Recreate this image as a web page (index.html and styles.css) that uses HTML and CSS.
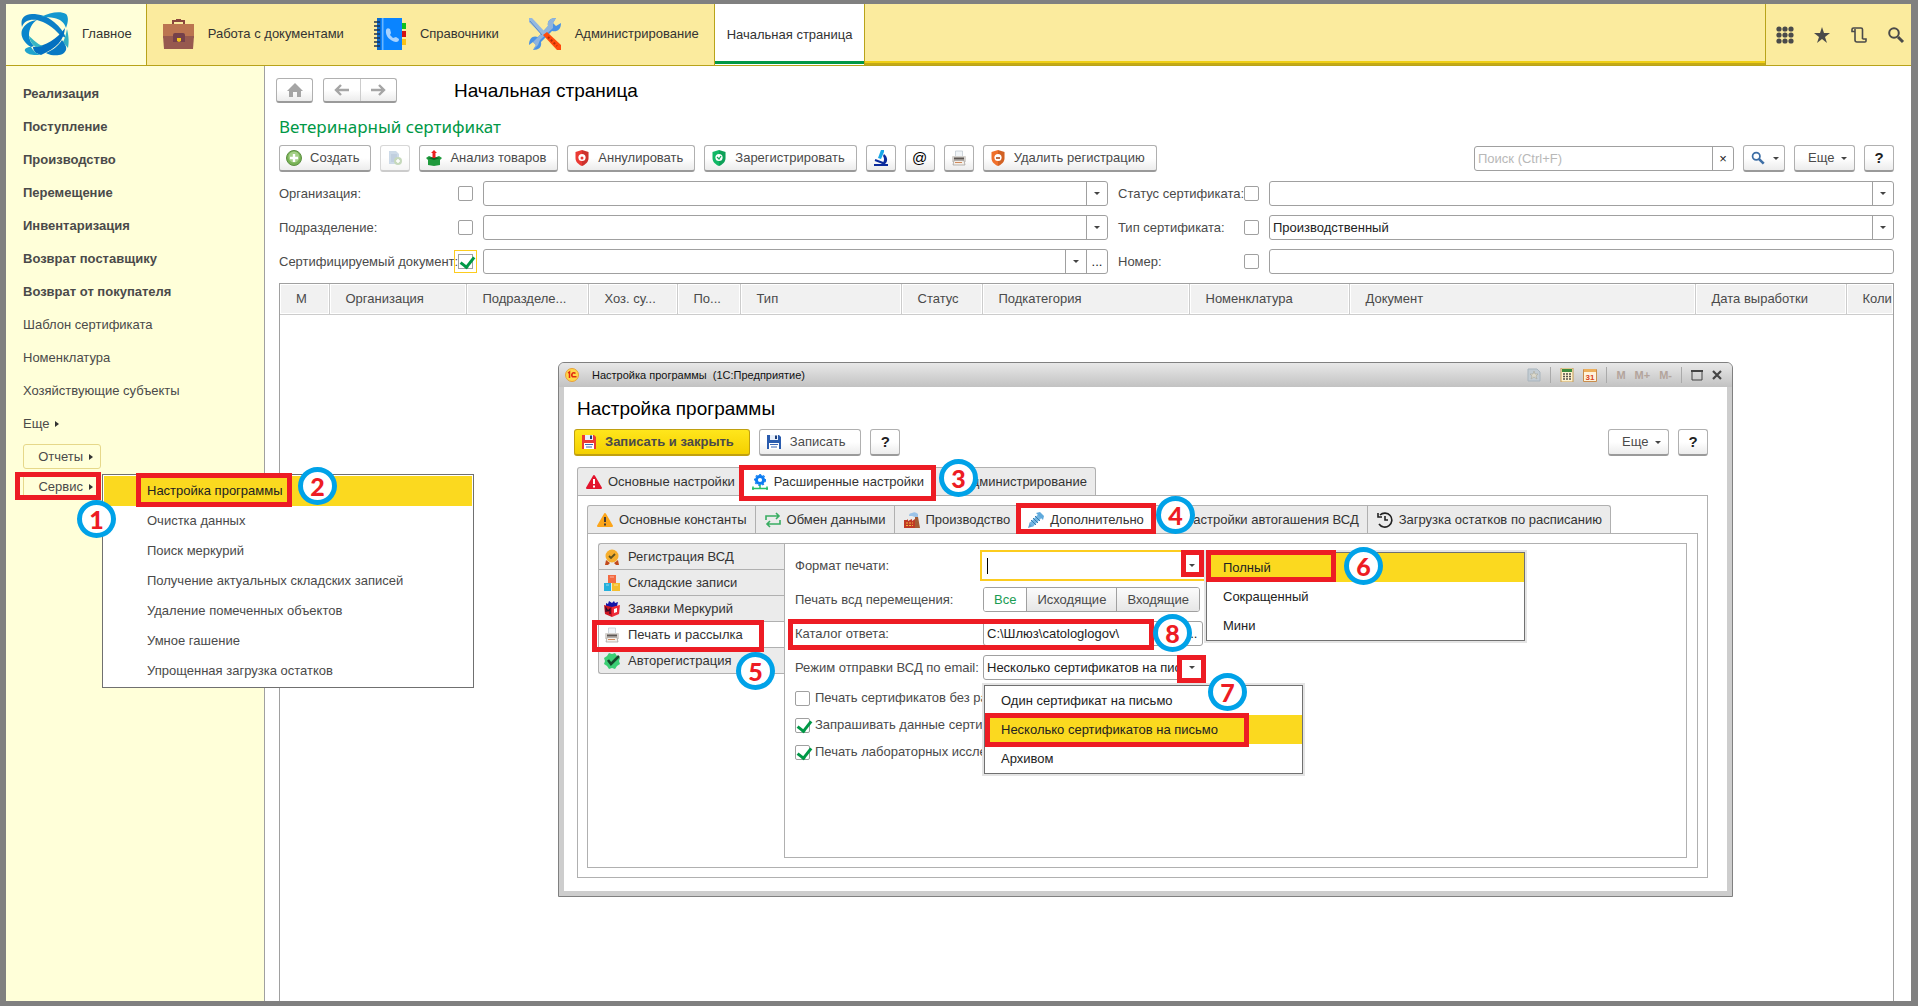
FILE: index.html
```
<!DOCTYPE html>
<html lang="ru">
<head>
  <meta charset="utf-8">
  <title>Начальная страница</title>
  <link rel="stylesheet" href="styles.css">
</head>
<body>
  <!-- shared icons -->
  <svg class="sprite" aria-hidden="true">
    <symbol id="i-printer" viewBox="0 0 16 16">
      <path d="M4.500 1h7v6h-7z" fill="#f1f5f8" stroke="#b4bec6" stroke-width=".6"/>
      <path d="M1 7q0-1 1-1h12q1 0 1 1v5H1z" fill="#d6d3cf"/>
      <path d="M3 7.500h10v2H3z" fill="#5e5753"/>
      <path d="M3 10.500h10l1 4.500H2z" fill="#f4efe9" stroke="#8f8a86" stroke-width=".6"/>
      <path d="M4 12.500h7" stroke="#d08a5c"/>
    </symbol>
    <symbol id="i-shield" viewBox="0 0 16 16">
      <path d="M8 0l6.500 2v6c0 4-3 6.500-6.500 8-3.500-1.500-6.500-4-6.500-8V2z" fill="currentColor"/>
      <path d="M8 0l6.500 2v6c0 4-3 6.500-6.500 8z" fill="#000" opacity=".12"/>
      <circle cx="8" cy="7.500" r="3.600" fill="#fff"/>
    </symbol>
    <symbol id="i-floppy" viewBox="0 0 16 16">
      <path d="M1 1h12l2 2v12H1z" fill="currentColor"/>
      <path d="M4 1h8v5H4z" fill="#e8f0fb"/>
      <path d="M9 1.500h2v3.500H9z" fill="#1d3e78"/>
      <path d="M3 9h10v6H3z" fill="#fff"/>
      <path d="M4 10.500h8M5 13h6" stroke="#3b67b5" stroke-width="1.200"/>
    </symbol>
    <symbol id="i-lens" viewBox="0 0 16 16">
      <circle cx="6" cy="6" r="4.200" fill="none" stroke="currentColor" stroke-width="2"/>
      <path d="M9 9l5.500 5.500" stroke="currentColor" stroke-width="3"/>
    </symbol>
  </svg>

  <div class="app">
    <header class="header">
      <nav class="sections">
        <a class="section current" href="#">
          <svg width="48" height="44" viewBox="0 0 48 44">
            <path d="M1 15C-1 7 3 2 11 2c8 0 15 2 22 8 6 5 10 10 12 16l-6-3C32 15 24 10 16 8 8 7 3 9 1 15z" fill="#0c7fc7"/>
            <path d="M20 5C29 0 40-1 45 2c3 3 2 9 0 14-2-6-6-9-12-10-4-1-8-1-13-1z" fill="#1498cf"/>
            <path d="M16 8c-5 3-8 9-8 15 0 4 2 8 5 11l-3 1C3 31-1 24 1 18c2-5 7-9 15-10z" fill="#0a86cc"/>
            <path d="M44 16c-1 12-8 20-24 27l-5-2c-2-2-3-4-3-6 13-1 24-8 32-19z" fill="#0470c0"/>
            <path d="M8 24c5 4 8 8 14 10l-7 1c-3-2-6-5-7-11z" fill="#36b5c4"/>
            <path d="M10 35c-4 0-7 2-6 4 2 3 6 4 11 4h5c-4-1-8-4-10-8z" fill="#20a4cd"/>
            <path d="M46 17c2 8 2 14 1 19l-5-6c2-4 3-8 4-13z" fill="#31aec4"/>
            <path d="M41 28c3 4 5 7 4 10-2 5-8 6-15 5-2-1-4-1-5-2 7-3 12-7 16-13z" fill="#0879c4"/>
          </svg>
          Главное
        </a>
        <a class="section" href="#">
          <svg width="32" height="32" viewBox="0 0 32 32">
            <path d="M10 6V2h4V1h5v1h4v4h-2V4H12v2z" fill="#8a463e"/>
            <path d="M1 6h31v14H1z" fill="#bb7450"/>
            <path d="M1 18h31l-1 13H2z" fill="#97594f"/>
            <path d="M11 17q0-2 2-2h8q2 0 2 2v7H11z" fill="#74404a"/>
            <path d="M15 20h4v3l-2 1-2-1z" fill="#f4c41c"/>
          </svg>
          Работа с документами
        </a>
        <a class="section" href="#">
          <svg width="32" height="32" viewBox="0 0 32 32">
            <path d="M28 5h4v6h-4z" fill="#0fc01d"/>
            <path d="M28 13h4v6h-4z" fill="#d31212"/>
            <path d="M28 21h4v6h-4z" fill="#fbc316"/>
            <path d="M3 0h25v32H3z" fill="#0a84ff"/>
            <path d="M3 0h4v32H3z" fill="#0b6bd0"/>
            <path d="M8 0h1.500v32H8z" fill="#69b5ff"/>
            <path d="M0 4h6M0 8h6M0 12h6M0 16h6M0 20h6M0 24h6M0 28h6" stroke="#1d3550" stroke-width="1.500"/>
            <path d="M12 12q1-3 4-1l1 4-1 2 3 3 3-1 3 2q0 3-3 3c-6-1-11-6-10-12z" fill="#a8d3ff"/>
          </svg>
          Справочники
        </a>
        <a class="section" href="#">
          <svg width="32" height="32" viewBox="0 0 32 32">
            <path d="M19 8c-1-5 2-8 8-8l-3 5 3 3 5-3c0 7-4 9-9 8L12 24c1 5-2 8-8 8l3-5-3-3-4 3c0-7 4-10 9-8z" fill="#4a92e4"/>
            <path d="M19 8c-1-5 2-8 8-8l-3 5v5L11 22l-2 5-5 5 3-5-3-3 5-5z" fill="#8fb4dd"/>
            <path d="M0 0h3l14 15-3 3L0 4z" fill="#93b8e0"/>
            <path d="M1 3l12 14" stroke="#5f8cc4"/>
            <path d="M14 17l4-3 14 13v5h-4z" fill="#ff4a0c"/>
            <path d="M19 19l9 9" stroke="#b42c08" stroke-width="2" stroke-dasharray="2 2"/>
          </svg>
          Администрирование
        </a>
      </nav>
      <a class="home-tab" href="#">Начальная страница</a>
      <div class="header-fill"></div>
      <div class="header-tools">
        <button type="button" aria-label="Функции">
          <svg width="18" height="18" viewBox="0 0 18 18" fill="#4a4a4a">
            <circle cx="3" cy="3" r="2.600"/><circle cx="9" cy="3" r="2.600"/><circle cx="15" cy="3" r="2.600"/>
            <circle cx="3" cy="9" r="2.600"/><circle cx="9" cy="9" r="2.600"/><circle cx="15" cy="9" r="2.600"/>
            <circle cx="3" cy="15" r="2.600"/><circle cx="9" cy="15" r="2.600"/><circle cx="15" cy="15" r="2.600"/>
          </svg>
        </button>
        <button type="button" aria-label="Избранное">
          <svg width="18" height="18" viewBox="0 0 18 18"><path d="M9 1l2 6h6l-5 4 2 6-5-4-5 4 2-6-5-4h6z" fill="#4a4a4a"/></svg>
        </button>
        <button type="button" aria-label="История">
          <svg width="18" height="18" viewBox="0 0 18 18" fill="none" stroke="#4a4a4a" stroke-width="1.600"><path d="M5 5.500H2V3.500q0-1.500 1.500-1.500H11q1.500 0 1.500 1.500V13M5 3v11q0 2 2 2h8q1 0 1-1v-2h-3.500"/></svg>
        </button>
        <button type="button" aria-label="Поиск">
          <svg width="18" height="18" viewBox="0 0 18 18" fill="none" stroke="#4a4a4a"><circle cx="7" cy="7" r="4.800" stroke-width="2"/><path d="M11 11l5 5" stroke-width="3"/></svg>
        </button>
      </div>
    </header>

    <div class="workspace">
      <aside class="sidebar">
        <a class="strong" href="#">Реализация</a>
        <a class="strong" href="#">Поступление</a>
        <a class="strong" href="#">Производство</a>
        <a class="strong" href="#">Перемещение</a>
        <a class="strong" href="#">Инвентаризация</a>
        <a class="strong" href="#">Возврат поставщику</a>
        <a class="strong" href="#">Возврат от покупателя</a>
        <a href="#">Шаблон сертификата</a>
        <a href="#">Номенклатура</a>
        <a href="#">Хозяйствующие субъекты</a>
        <a href="#">Еще <i class="arrow-right"></i></a>
        <button class="side-btn" type="button">Отчеты <i class="arrow-right"></i></button>
        <button class="side-btn" type="button">Сервис <i class="arrow-right"></i></button>
      </aside>

      <main class="main">
        <div class="nav-row">
          <button class="btn nav-home" type="button" aria-label="Домой">
            <svg width="16" height="14" viewBox="0 0 16 14"><path d="M8 0l8 8h-2v6h-4V9H6v5H2V8H0z" fill="#a5a5a5"/></svg>
          </button>
          <div class="nav-pair">
            <button type="button" aria-label="Назад">
              <svg width="16" height="12" viewBox="0 0 16 12"><path d="M15 6H3M7 1L2 6l5 5" fill="none" stroke="#a5a5a5" stroke-width="2.400"/></svg>
            </button>
            <button type="button" aria-label="Вперед">
              <svg width="16" height="12" viewBox="0 0 16 12"><path d="M1 6h12M9 1l5 5-5 5" fill="none" stroke="#a5a5a5" stroke-width="2.400"/></svg>
            </button>
          </div>
          <h1>Начальная страница</h1>
        </div>

        <section class="list">
          <h2>Ветеринарный сертификат</h2>
          <div class="toolbar">
            <button class="btn" type="button">
              <svg width="16" height="16" viewBox="0 0 16 16"><circle cx="8" cy="8" r="7.500" fill="#78b255" stroke="#5d8f43"/><circle cx="8" cy="7" r="5.500" fill="#a5d088"/><path d="M8 4v8M4 8h8" stroke="#fff" stroke-width="2.400"/></svg>
              Создать
            </button>
            <button class="btn square" type="button" disabled aria-label="Скопировать">
              <svg width="16" height="16" viewBox="0 0 16 16"><path d="M2 1h7l3 3v10H2z" fill="#9db6d3"/><path d="M4 5h6M4 7h6M4 9h5M4 11h4" stroke="#6d8bb0"/><circle cx="11" cy="11" r="4" fill="#8fb57c"/><path d="M11 9v4M9 11h4" stroke="#fff" stroke-width="1.500"/></svg>
            </button>
            <button class="btn" type="button">
              <svg width="16" height="16" viewBox="0 0 16 16"><path d="M0 8l3-2 5 2 5-2 3 2-2 2v5l-6 1-6-1v-5z" fill="#1f9a3c"/><path d="M2 8l6 2 6-2-6-1z" fill="#0c6423"/><path d="M8 0l3 3H9.500v5h-3V3H5z" fill="#ea2020"/></svg>
              Анализ товаров
            </button>
            <button class="btn red" type="button">
              <svg width="16" height="16"><use href="#i-shield"/><circle cx="8" cy="8" r="1.500" fill="#ea3a34"/></svg>
              Аннулировать
            </button>
            <button class="btn green" type="button">
              <svg width="16" height="16"><use href="#i-shield"/><path d="M6 7l2 2 2-3" fill="none" stroke="#12a95c" stroke-width="1.200"/></svg>
              Зарегистрировать
            </button>
            <button class="btn square" type="button" aria-label="Лаборатория">
              <svg width="16" height="16" viewBox="0 0 16 16"><path d="M8 0h3v2l-3 7-3-1z" fill="#18a7e8"/><path d="M11 4c4 3 4 8 1 10h3v2H1v-2h7c3-1 4-5 2-8z" fill="#0b2b9c"/><path d="M2 10l8 3" stroke="#0b2b9c" stroke-width="2"/></svg>
            </button>
            <button class="btn square at" type="button">@</button>
            <button class="btn square" type="button" aria-label="Печать"><svg width="16" height="16"><use href="#i-printer"/></svg></button>
            <button class="btn orange" type="button">
              <svg width="16" height="16"><use href="#i-shield"/><path d="M6 8h4" stroke="#a33e0d" stroke-width="1.500"/></svg>
              Удалить регистрацию
            </button>
            <div class="field search">
              <input type="text" placeholder="Поиск (Ctrl+F)" aria-label="Поиск">
              <button type="button">×</button>
            </div>
            <button class="btn find" type="button" aria-label="Найти"><svg width="14" height="14"><use href="#i-lens"/></svg><i class="arrow-down"></i></button>
            <button class="btn more" type="button">Еще <i class="arrow-down"></i></button>
            <button class="btn square help" type="button">?</button>
          </div>

          <form class="filters">
            <label for="org">Организация:</label>
            <input type="checkbox" aria-label="Отбор по организации">
            <div class="field"><select id="org"><option></option></select><i class="drop"></i></div>
            <label for="status">Статус сертификата:</label>
            <input type="checkbox" aria-label="Отбор по статусу">
            <div class="field"><select id="status"><option></option></select><i class="drop"></i></div>

            <label for="dep">Подразделение:</label>
            <input type="checkbox" aria-label="Отбор по подразделению">
            <div class="field"><select id="dep"><option></option></select><i class="drop"></i></div>
            <label for="type">Тип сертификата:</label>
            <input type="checkbox" aria-label="Отбор по типу">
            <div class="field"><select id="type"><option>Производственный</option></select><i class="drop"></i></div>

            <label for="doc">Сертифицируемый документ:</label>
            <input class="focused" type="checkbox" checked aria-label="Отбор по документу">
            <div class="field"><input id="doc" type="text"><button type="button" aria-label="Список"><i class="arrow-down"></i></button><button class="dots" type="button">...</button></div>
            <label for="num">Номер:</label>
            <input type="checkbox" aria-label="Отбор по номеру">
            <div class="field"><input id="num" type="text"></div>
          </form>

          <div class="table-box">
            <table>
              <colgroup>
                <col class="w49"><col class="w137"><col class="w122"><col class="w89"><col class="w63"><col class="w161">
                <col class="w81"><col class="w207"><col class="w160"><col><col class="w151"><col class="w47">
              </colgroup>
              <thead>
                <tr>
                  <th>М</th>
                  <th>Организация</th>
                  <th>Подразделе...</th>
                  <th>Хоз. су...</th>
                  <th>По...</th>
                  <th>Тип</th>
                  <th>Статус</th>
                  <th>Подкатегория</th>
                  <th>Номенклатура</th>
                  <th>Документ</th>
                  <th>Дата выработки</th>
                  <th>Коли</th>
                </tr>
              </thead>
            </table>
          </div>
        </section>
      </main>
    </div>

    <!-- service menu -->
    <ul class="popup service-menu">
      <li class="active"><a href="#">Настройка программы</a></li>
      <li><a href="#">Очистка данных</a></li>
      <li><a href="#">Поиск меркурий</a></li>
      <li><a href="#">Получение актуальных складских записей</a></li>
      <li><a href="#">Удаление помеченных объектов</a></li>
      <li><a href="#">Умное гашение</a></li>
      <li><a href="#">Упрощенная загрузка остатков</a></li>
    </ul>

    <!-- settings window -->
    <div class="dialog" role="dialog" aria-label="Настройка программы">
      <div class="titlebar">
        <svg width="14" height="14" viewBox="0 0 14 14"><circle cx="7" cy="7" r="6.500" fill="#ffd84a" stroke="#e8a03a"/><path d="M3 5l1.500-1v6M10.500 5.500Q9 4 7.500 5.200 6 7 7.500 8.800h4" fill="none" stroke="#e02a12" stroke-width="1.500"/></svg>
        <span class="caption">Настройка программы &nbsp;(1С:Предприятие)</span>
        <svg width="14" height="14" viewBox="0 0 14 14"><path d="M1 1h9l3 3v9H1z" fill="#c3ccd3" stroke="#a9b5be"/><path d="M7 3l1 3h3L9 8l1 3-3-2-3 2 1-3-2-2h3z" fill="#dcd9cc" stroke="#a7a79c" stroke-width=".6"/></svg>
        <i class="sep"></i>
        <svg width="14" height="14" viewBox="0 0 14 14"><path d="M1 0h12v14H1z" fill="#fff3cf" stroke="#c49b56"/><path d="M2 1h10v3H2z" fill="#3f8d3f"/><path d="M3 6h8M3 8.500h8M3 11h8" stroke="#55504a" stroke-width="1.300" stroke-dasharray="2 1"/></svg>
        <svg class="calendar" width="14" height="14" viewBox="0 0 14 14"><path d="M.5 1.500h13v12H.5z" fill="#fff3dc" stroke="#c98d4d"/><path d="M1 1h12v3H1z" fill="#eeb05c"/><text x="7" y="12" text-anchor="middle">31</text></svg>
        <i class="sep"></i>
        <span class="mem">M</span><span class="mem">M+</span><span class="mem">M-</span>
        <i class="sep"></i>
        <button type="button" aria-label="Развернуть"><svg width="12" height="11" viewBox="0 0 12 11"><path d="M1 1h10v9H1z" fill="none" stroke="#444"/><path d="M0 1h12" stroke="#444" stroke-width="2"/></svg></button>
        <button type="button" aria-label="Закрыть"><svg width="10" height="10" viewBox="0 0 10 10"><path d="M1 1l8 8M9 1L1 9" stroke="#444" stroke-width="2.200"/></svg></button>
      </div>

      <div class="dialog-body">
        <h1>Настройка программы</h1>
        <div class="dialog-bar">
          <button class="btn primary" type="button"><svg class="red" width="16" height="16"><use href="#i-floppy"/></svg>Записать и закрыть</button>
          <button class="btn" type="button"><svg class="blue" width="16" height="16"><use href="#i-floppy"/></svg>Записать</button>
          <button class="btn square help" type="button">?</button>
          <button class="btn more" type="button">Еще <i class="arrow-down"></i></button>
          <button class="btn square help" type="button">?</button>
        </div>

        <div class="tabs">
          <button type="button"><svg width="16" height="16" viewBox="0 0 16 16"><path d="M8 2l7 12H1z" fill="#e3142d" stroke="#e3142d" stroke-width="2" stroke-linejoin="round"/><path d="M8 5v5M8 11.500v2" stroke="#fff" stroke-width="2"/></svg>Основные настройки</button>
          <button class="active" type="button"><svg width="16" height="16" viewBox="0 0 16 16"><circle cx="8" cy="6" r="3.600" fill="none" stroke="#0d7df2" stroke-width="3"/><circle cx="8" cy="6" r="5.400" fill="none" stroke="#0d7df2" stroke-width="1.200" stroke-dasharray="2 2"/><path d="M0 14.500h16M1 12.500v3.500M15 12.500v3.500M8 11v4" stroke="#26bf67" stroke-width="1.500"/></svg>Расширенные настройки</button>
          <button type="button"><svg width="16" height="16"></svg>Администрирование</button>
        </div>
        <div class="panel">
          <div class="tabs">
            <button type="button"><svg width="16" height="16" viewBox="0 0 16 16"><path d="M8 2l7 12H1z" fill="#fca51a" stroke="#fca51a" stroke-width="2" stroke-linejoin="round"/><path d="M8 5v5M8 11.500v2" stroke="#413a36" stroke-width="2"/></svg>Основные константы</button>
            <button type="button"><svg width="16" height="16" viewBox="0 0 16 16" fill="none" stroke="#39ad62" stroke-width="1.600"><path d="M1 8V4h13M11 1l3 3-3 3M15 8v4H2M5 9l-3 3 3 3"/></svg>Обмен данными</button>
            <button type="button"><svg width="16" height="16" viewBox="0 0 16 16"><path d="M5 4q0-3 3-3 3-2 6 1v3h-3L8 4z" fill="#9bc3e8"/><path d="M0 16V8h3l1-1v2l4-2v2l3-2v9z" fill="#c03a25"/><path d="M11 5h3l2 11h-5z" fill="#a35b34"/><path d="M2 11h7M2 13.500h7" stroke="#f5b53d" stroke-dasharray="2 1"/></svg>Производство</button>
            <button class="active" type="button"><svg width="16" height="16" viewBox="0 0 16 16"><path d="M0 16l2-6 4 4z" fill="#5c9fd0"/><path d="M3 13l9-9" stroke="#71b5e3" stroke-width="5"/><path d="M3 8l5 5M5 6l5 5M7 4l5 5" stroke="#377cae"/><path d="M8 1l7 7 1-4-4-4z" fill="#5fa9dc"/></svg>Дополнительно</button>
            <button type="button"><svg width="16" height="16"></svg>Настройки автогашения ВСД</button>
            <button type="button"><svg width="16" height="16" viewBox="0 0 16 16" fill="none" stroke="#222" stroke-width="1.600"><path d="M3 3A7 7 0 1 1 2 12" /><path d="M1 1v4h4" /><path d="M8 4v4h3"/></svg>Загрузка остатков по расписанию</button>
          </div>
          <div class="panel inner">
            <div class="side-tabs">
              <button type="button"><svg width="16" height="16" viewBox="0 0 16 16"><path d="M1 16l1-5 4 3-2 2zM15 16l-1-5-4 3 2 2z" fill="#c14a1c"/><circle cx="8" cy="7" r="6.500" fill="#f6ae2d"/><path d="M5 7l2 2 4-4" fill="none" stroke="#5f5220" stroke-width="1.800"/></svg>Регистрация ВСД</button>
              <button type="button"><svg width="16" height="16" viewBox="0 0 16 16"><path d="M4 0h8v8H4z" fill="#f36a42"/><path d="M0 8h7v8H0z" fill="#24b0dc"/><path d="M8 8h8v8H8z" fill="#f4be2c"/><path d="M6 2h4M2 10h3M10 10h4" stroke="#fff" opacity=".5"/></svg>Складские записи</button>
              <button type="button"><svg width="16" height="16" viewBox="0 0 16 16"><path d="M2 2l2 1 1-3 3 2 2-2 1 2 3-1-1 4-5 2-6-2z" fill="#1417a8"/><path d="M0 4l8 2v10l-7-3z" fill="#cf1420"/><path d="M16 4L8 6v10l7-3z" fill="#ee2b38"/><path d="M2 11V7l2 3 2-2v5" fill="none" stroke="#260b2c" stroke-width="1.200"/><path d="M10 8l3-1v4l-3 1z" fill="#fff"/></svg>Заявки Меркурий</button>
              <button class="active" type="button"><svg width="16" height="16"><use href="#i-printer"/></svg>Печать и рассылка</button>
              <button type="button"><svg width="16" height="16" viewBox="0 0 16 16"><path d="M5 0l3 1 3-1 2 3 3 2-1 3 1 3-3 2-2 3-3-1-3 1-2-3-3-2 1-3-1-3 3-2z" fill="#3bce74"/><path d="M4 7l3 4 8-8" fill="none" stroke="#15472b" stroke-width="2.600"/></svg>Авторегистрация</button>
            </div>
            <form class="settings">
              <label for="fmt">Формат печати:</label>
              <div class="field current"><input id="fmt" type="text"><button type="button" aria-label="Список"><i class="arrow-down"></i></button></div>

              <span>Печать всд перемещения:</span>
              <div class="segmented">
                <button class="on" type="button">Все</button><button type="button">Исходящие</button><button type="button">Входящие</button>
              </div>

              <label for="dir">Каталог ответа:</label>
              <div class="field"><input id="dir" type="text" value="C:\Шлюз\catologlogov\"><button class="dots" type="button">...</button></div>

              <label for="mode">Режим отправки ВСД по email:</label>
              <div class="field"><select id="mode"><option>Несколько сертификатов на письмо</option></select><i class="drop"></i></div>

              <div class="checks">
                <label><input type="checkbox">Печать сертификатов без ра</label>
                <label><input type="checkbox" checked>Запрашивать данные серти</label>
                <label><input type="checkbox" checked>Печать лабораторных иссле</label>
              </div>
            </form>
          </div>
        </div>
      </div>
    </div>

    <ul class="popup choice format-menu">
      <li class="active">Полный</li>
      <li>Сокращенный</li>
      <li>Мини</li>
    </ul>
    <ul class="popup choice mode-menu">
      <li>Один сертификат на письмо</li>
      <li class="active">Несколько сертификатов на письмо</li>
      <li>Архивом</li>
    </ul>

    <!-- step marks over the interface -->
    <i class="mark m1"></i><b class="step s1">1</b>
    <i class="mark m2"></i><b class="step s2">2</b>
    <i class="mark m3"></i><b class="step s3">3</b>
    <i class="mark m4"></i><b class="step s4">4</b>
    <i class="mark m5"></i><b class="step s5">5</b>
    <i class="mark m6"></i><i class="mark m6-arrow"></i><b class="step s6">6</b>
    <i class="mark m7"></i><i class="mark m7-arrow"></i><b class="step s7">7</b>
    <i class="mark m8"></i><b class="step s8">8</b>
  </div>
</body>
</html>
```
FILE: styles.css
```
* {
  box-sizing: border-box;
}

body {
  margin: 0;
  font-family: "Liberation Sans", Arial, sans-serif;
  font-size: 13px;
  line-height: 16px;
  color: #4a4a4a;
  background: #fff;
}

button, input, select {
  font: inherit;
  color: inherit;
}

button {
  padding: 0;
  border: 0;
  background: none;
}

a {
  color: inherit;
  text-decoration: none;
}

svg {
  flex: none;
}

.sprite {
  position: absolute;
  width: 0;
  height: 0;
}

.app {
  position: relative;
  display: flex;
  flex-direction: column;
  min-height: 100vh;
  border: solid #808080;
  border-width: 4px 7px 5px 6px;
  overflow: hidden;
}

/* header */

.header {
  display: flex;
  height: 62px;
  background: #fbeb9e;
  border-bottom: 1px solid #b8a31a;
  color: #333;
}

.sections {
  display: flex;
}

.section {
  display: flex;
  align-items: center;
  gap: 14px;
  padding: 0 15px;
  padding-bottom: 2px;
}

.section.current {
  gap: 13px;
  padding: 0 14px 2px 15px;
  background: #ffffd9;
  border-right: 1px solid #b8a31a;
}

.home-tab {
  display: flex;
  align-items: center;
  padding: 0 12px;
  background: #fff;
  border: solid #b8a31a;
  border-width: 0 1px;
  box-shadow: inset 0 -1px #fff, inset 0 -4px #009846;
}

.header-fill {
  flex: 1;
  box-shadow: inset 0 -2px #c4a915, inset 0 -4px #efcf16;
}

.header-tools {
  display: flex;
  align-items: center;
  gap: 19px;
  padding: 0 6px 0 10px;
  border-left: 1px solid #b8a31a;
}

.header-tools svg {
  display: block;
}

/* sidebar */

.workspace {
  display: flex;
  flex: 1;
}

.sidebar {
  display: flex;
  flex-direction: column;
  align-items: flex-start;
  width: 259px;
  padding: 11px 17px;
  background: #ffffd9;
  border-right: 1px solid #a0a0a0;
}

.sidebar a {
  line-height: 33px;
}

.sidebar .strong {
  font-weight: bold;
}

.side-btn {
  width: 78px;
  height: 25px;
  margin: 4px 0 1px;
  padding-left: 7px;
  border: 1px solid #e6d88a;
  border-radius: 3px;
}

.arrow-right {
  display: inline-block;
  margin-left: 2px;
  border: 3px solid transparent;
  border-left: 4px solid #333;
  border-right: 0;
  vertical-align: 1px;
}

.arrow-down {
  display: inline-block;
  border: 3px solid transparent;
  border-top: 3px solid #444;
  border-bottom: 0;
}

/* main */

.main {
  display: flex;
  flex-direction: column;
  flex: 1;
  min-width: 0;
  padding: 12px 17px 0 11px;
}

h1 {
  margin: 0;
  font-size: 19px;
  line-height: 24px;
  font-weight: normal;
  color: #000;
}

.nav-row {
  display: flex;
  align-items: center;
  gap: 10px;
  height: 25px;
  margin-bottom: 12px;
}

.nav-row h1 {
  margin-left: 47px;
}

.btn {
  display: flex;
  align-items: center;
  gap: 8px;
  height: 27px;
  padding: 0 11px 0 6px;
  border: 1px solid #b0b0b0;
  border-bottom: 2px solid #9a9a9a;
  border-radius: 3px;
  background: linear-gradient(#fff 50%, #ececec);
  white-space: nowrap;
}

.btn.square {
  justify-content: center;
  width: 30px;
  padding: 0;
}

.btn:disabled {
  opacity: .5;
}

.nav-row .btn {
  justify-content: center;
  width: 37px;
  height: 25px;
  padding: 0;
}

.nav-pair {
  display: flex;
  width: 74px;
  height: 25px;
  border: 1px solid #b0b0b0;
  border-bottom: 2px solid #9a9a9a;
  border-radius: 3px;
  background: linear-gradient(#fff 50%, #ececec);
}

.nav-pair button {
  display: flex;
  justify-content: center;
  align-items: center;
  flex: 1;
}

.nav-pair button + button {
  border-left: 1px solid #ccc;
}

.list {
  display: flex;
  flex-direction: column;
  flex: 1;
  padding-left: 3px;
}

h2 {
  margin: 0 0 6px;
  font-family: "Noto Sans", sans-serif;
  font-size: 17px;
  line-height: 24px;
  font-weight: normal;
  color: #009846;
}

.toolbar {
  display: flex;
  gap: 9px;
  margin-bottom: 9px;
}

.red svg, svg.red { color: #ea3a34; }
.green svg { color: #12b866; }
.orange svg { color: #f0702a; }
.find svg { color: #3d6ea5; }
svg.blue { color: #2a5cae; }

.btn.at {
  font-size: 15px;
  color: #000;
}

.btn.help {
  font-size: 15px;
  font-weight: bold;
  color: #222;
}

.btn.find {
  gap: 8px;
  width: 42px;
  padding: 0 6px 0 7px;
}

.btn.more {
  gap: 7px;
  width: 61px;
  padding: 0 6px 0 13px;
}

.field {
  position: relative;
  display: flex;
  height: 25px;
  border: 1px solid #a0a0a0;
  border-radius: 3px;
  background: #fff;
  color: #222;
}

.field input, .field select {
  flex: 1;
  min-width: 0;
  padding: 0 3px;
  border: 0;
  outline: 0;
  background: none;
  appearance: none;
}

.field input::placeholder {
  color: #b8b8b8;
}

.field button {
  display: flex;
  justify-content: center;
  align-items: center;
  width: 21px;
  border-left: 1px solid #a0a0a0;
}

.field .drop {
  display: flex;
  justify-content: center;
  align-items: center;
  width: 21px;
  border-left: 1px solid #a0a0a0;
  pointer-events: none;
}

.field .drop::before {
  content: "";
  border: 3px solid transparent;
  border-top: 3px solid #444;
  border-bottom: 0;
}

.field.search {
  width: 260px;
  margin: 1px 0 0 auto;
}

input[type="checkbox"] {
  width: 15px;
  height: 15px;
  margin: 0;
  border: 1px solid #a0a0a0;
  border-radius: 2px;
  background: #fff;
  appearance: none;
}

/* tick */
input[type="checkbox"]:checked::before {
  content: "";
  display: block;
  width: 6px;
  height: 11px;
  margin: -1px 0 0 4px;
  border: solid #009846;
  border-width: 0 3px 3px 0;
  transform: rotate(38deg);
}

input[type="checkbox"].focused {
  outline: 1px solid #fccc1f;
  outline-offset: 3px;
  border-radius: 0;
}

.filters {
  display: grid;
  grid-template-columns: 169px 15px 1fr 116px 15px 1fr;
  gap: 9px 10px;
  align-items: center;
  margin-bottom: 9px;
  white-space: nowrap;
}

.table-box {
  flex: 1;
  border: 1px solid #a0a0a0;
  border-bottom: 0;
  overflow: hidden;
}

table {
  width: 100%;
  border-collapse: collapse;
  table-layout: fixed;
}

th {
  height: 30px;
  padding: 0 0 0 16px;
  font-weight: normal;
  text-align: left;
  white-space: nowrap;
  background: #f1f1f1;
  border-right: 1px solid #ccc;
  border-bottom: 1px solid #ccc;
  box-shadow: inset 0 0 0 1px #fff;
}

th:last-child {
  border-right: 0;
}

.w47 { width: 47px; }
.w49 { width: 49px; }
.w63 { width: 63px; }
.w81 { width: 81px; }
.w89 { width: 89px; }
.w122 { width: 122px; }
.w137 { width: 137px; }
.w151 { width: 151px; }
.w160 { width: 160px; }
.w161 { width: 161px; }
.w207 { width: 207px; }

/* popups */

.popup {
  position: absolute;
  margin: 0;
  padding: 0;
  list-style: none;
  border: 1px solid #707070;
  background: #fff;
  color: #4a4a4a;
  line-height: 30px;
}

.popup .active {
  background: #fbd91f;
  color: #222;
}

.service-menu {
  left: 96px;
  top: 470px;
  width: 372px;
  padding: 1px;
}

.service-menu li {
  padding-left: 43px;
}

.choice {
  width: 319px;
  line-height: 29px;
  color: #222;
  box-shadow: 0 0 0 2px #e4e4e4;
}

.choice li {
  padding-left: 16px;
}

.format-menu {
  left: 1200px;
  top: 548px;
}

.mode-menu {
  left: 978px;
  top: 681px;
}

/* settings window */

.dialog {
  position: absolute;
  left: 552px;
  top: 358px;
  width: 1175px;
  padding: 0 5px 5px;
  border: 1px solid #808080;
  border-radius: 6px 6px 0 0;
  background: #cdcdcd;
}

.titlebar {
  display: flex;
  align-items: center;
  gap: 9px;
  height: 24px;
  margin: 0 -5px;
  padding: 0 10px 0 6px;
  border-radius: 5px 5px 0 0;
  background: linear-gradient(#e8e8e8, #c2c2c2);
  font-size: 11px;
  color: #111;
}

.caption {
  flex: 1;
  padding-left: 4px;
}

.titlebar .sep {
  width: 1px;
  height: 16px;
  background: #aaa;
}

.calendar {
  font-size: 8px;
  font-weight: bold;
  fill: #d8431c;
}

.mem {
  color: #b3a49c;
  font-weight: bold;
}

.titlebar button svg {
  display: block;
}

.dialog-body {
  padding: 10px 19px 13px 13px;
  background: #fff;
}

.dialog-bar {
  display: flex;
  gap: 9px;
  margin: 8px 0 11px -3px;
}

.dialog-bar .btn {
  padding-right: 15px;
}

.dialog-bar .square {
  padding: 0;
}

.dialog-bar .more {
  margin-left: auto;
  padding-right: 6px;
}

.btn.primary {
  border-color: #c0a010;
  background: linear-gradient(#ffe61c, #f4d000);
  font-weight: bold;
}

.tabs {
  display: flex;
  height: 28px;
}

.tabs button {
  display: flex;
  align-items: center;
  gap: 6px;
  padding: 0 8px;
  border: 1px solid #b0b0b0;
  border-width: 1px 1px 0 0;
  background: #ebebeb;
  color: #333;
  white-space: nowrap;
}

.tabs .tabs button, .panel .tabs button {
  padding-left: 9px;
}

.tabs button:first-child {
  border-left-width: 1px;
  border-radius: 3px 0 0 0;
}

.tabs button:last-child {
  border-radius: 0 3px 0 0;
}

.tabs .active {
  margin-bottom: -1px;
  background: #fff;
}

.panel {
  padding: 9px;
  border: 1px solid #b0b0b0;
}

.inner {
  display: flex;
  padding: 9px 10px;
}

.side-tabs {
  display: flex;
  flex-direction: column;
  width: 186px;
}

.side-tabs button {
  display: flex;
  align-items: center;
  gap: 8px;
  height: 26px;
  padding-left: 5px;
  border: 1px solid #b0b0b0;
  border-width: 1px 0 0 1px;
  background: #ebebeb;
  color: #333;
}

.side-tabs button:first-child {
  border-radius: 3px 0 0 0;
}

.side-tabs button:last-child {
  height: 27px;
  border-bottom-width: 1px;
  border-radius: 0 0 0 3px;
}

.side-tabs .active {
  margin-right: -1px;
  background: #fff;
}

.settings {
  display: grid;
  grid-template-columns: 188px 220px;
  align-content: start;
  align-items: center;
  row-gap: 9px;
  flex: 1;
  min-height: 315px;
  padding: 9px 10px;
  border: 1px solid #b0b0b0;
  white-space: nowrap;
}

.field.current {
  border-color: #fff;
  border-radius: 0;
  outline: 2px solid #fccc1f;
  outline-offset: 1px;
}

.current input {
  background: linear-gradient(#000, #000) 3px 4px / 1px 16px no-repeat;
}

.segmented {
  display: flex;
  height: 25px;
  width: 217px;
  border: 1px solid #a0a0a0;
  border-radius: 3px;
  overflow: hidden;
}

.segmented button {
  flex: auto;
  background: linear-gradient(#fbfbfb, #e6e6e6);
}

.segmented button + button {
  border-left: 1px solid #a0a0a0;
}

.segmented .on {
  background: #fff;
  color: #1a9c52;
}

.checks {
  display: flex;
  flex-direction: column;
  gap: 11px;
  grid-column: 1 / -1;
  padding-top: 1px;
}

.checks label {
  display: flex;
  align-items: center;
  gap: 5px;
}

/* step marks */

.mark {
  position: absolute;
  border: 5px solid #ed1c24;
}

.step {
  position: absolute;
  display: flex;
  justify-content: center;
  align-items: center;
  width: 39px;
  height: 38px;
  border: 5px solid #00a2e8;
  border-radius: 50%;
  background: #fff;
  color: #ed1c24;
  font-family: Lato, sans-serif;
  font-size: 25px;
  font-weight: 900;
  line-height: 26px;
}

.m1 { left: 9px; top: 468px; width: 86px; height: 28px; }
.m2 { left: 130px; top: 469px; width: 156px; height: 34px; }
.m3 { left: 733px; top: 461px; width: 197px; height: 36px; }
.m4 { left: 1010px; top: 499px; width: 140px; height: 31px; }
.m5 { left: 586px; top: 616px; width: 172px; height: 32px; }
.m6 { left: 1200px; top: 546px; width: 130px; height: 32px; }
.m6-arrow { left: 1175px; top: 546px; width: 23px; height: 27px; }
.m7 { left: 979px; top: 709px; width: 264px; height: 34px; }
.m7-arrow { left: 1171px; top: 651px; width: 29px; height: 28px; }
.m8 { left: 782px; top: 615px; width: 366px; height: 31px; }

.s1 { left: 71px; top: 496px; }
.s2 { left: 292px; top: 463px; }
.s3 { left: 933px; top: 455px; }
.s4 { left: 1150px; top: 492px; }
.s5 { left: 730px; top: 648px; }
.s6 { left: 1338px; top: 543px; }
.s7 { left: 1202px; top: 669px; }
.s8 { left: 1147px; top: 610px; }
```
